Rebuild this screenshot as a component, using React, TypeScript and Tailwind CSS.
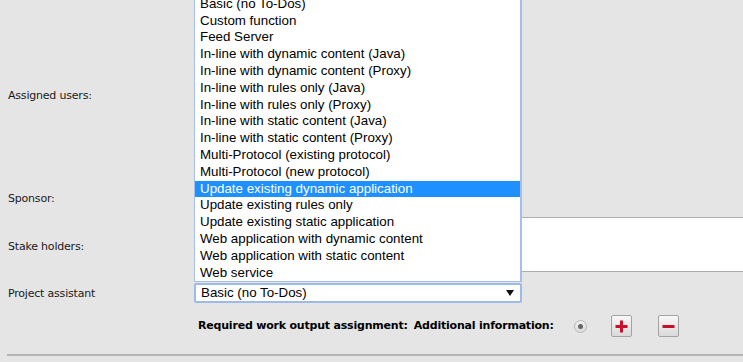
const OPTIONS = [
  'Basic (no To-Dos)',
  'Custom function',
  'Feed Server',
  'In-line with dynamic content (Java)',
  'In-line with dynamic content (Proxy)',
  'In-line with rules only (Java)',
  'In-line with rules only (Proxy)',
  'In-line with static content (Java)',
  'In-line with static content (Proxy)',
  'Multi-Protocol (existing protocol)',
  'Multi-Protocol (new protocol)',
  'Update existing dynamic application',
  'Update existing rules only',
  'Update existing static application',
  'Web application with dynamic content',
  'Web application with static content',
  'Web service',
];

const SELECTED = 'Update existing dynamic application';

function Label({ children, className = '' }: { children: React.ReactNode; className?: string }) {
  return (
    <div className={`pl-2 text-[11px] text-[#1a1a1a] tracking-[-0.2px] ${className}`}>{children}</div>
  );
}

function IconButton({ kind }: { kind: 'plus' | 'minus' }) {
  return (
    <button className="w-[21px] h-[22px] flex items-center justify-center rounded-[2px] border border-[#a3a3a3] bg-gradient-to-b from-[#f7f7f7] to-[#dadada]">
      <svg width="13" height="13" viewBox="0 0 13 13">
        {kind === 'plus' && <rect x="5" y="0.5" width="3" height="12" fill="#c8102e" />}
        <rect x="0.5" y="5" width="12" height="3" fill="#c8102e" />
      </svg>
    </button>
  );
}

export default function App() {
  return (
    <div className="relative w-[743px] h-[362px] overflow-hidden bg-[#e5e5e5] font-['DejaVu_Sans',sans-serif]">
      <div className="flex flex-col">
        <div className="h-[188px] grid grid-cols-[194px_1fr] items-center">
          <Label className="pt-[5px]">Assigned users:</Label>
          <div />
        </div>

        <div className="h-[20px] grid grid-cols-[194px_1fr] items-center">
          <Label className="pt-[2px]">Sponsor:</Label>
          <div />
        </div>

        <div className="mt-[9px] h-[55px] grid grid-cols-[194px_1fr] items-center">
          <Label className="pt-[5px]">Stake holders:</Label>
          <div className="h-full bg-white border-y border-[#adadad]" />
        </div>

        <div className="mt-[11px] h-[20px] grid grid-cols-[194px_1fr] items-center">
          <Label className="pt-[2px]">Project assistant</Label>
          <div className="w-[328px] h-[20px] flex items-center justify-between pl-[5px] pr-[6px] bg-white border-2 border-[#9dbbe8] rounded-[2px] font-['Liberation_Sans',Arial,sans-serif] text-[13.33px] text-black">
            <span>Basic (no To-Dos)</span>
            <svg width="8" height="6" viewBox="0 0 8 6">
              <path d="M0 0h8L4 6z" fill="#111" />
            </svg>
          </div>
        </div>

        <div className="mt-[12px] h-[22px] grid grid-cols-[194px_1fr] items-center">
          <div />
          <div className="flex items-center pl-1 text-[11px] font-bold text-black tracking-[-0.2px]">
            <span>Required work output assignment:</span>
            <span className="ml-[6px]">Additional information:</span>
            <span className="ml-[20px] w-[13px] h-[13px] rounded-full border border-[#b8b8b8] bg-gradient-to-b from-[#f0f0f0] to-[#dcdcdc] flex items-center justify-center">
              <span className="w-[5px] h-[5px] rounded-full bg-[#666]" />
            </span>
            <span className="ml-[24px]"><IconButton kind="plus" /></span>
            <span className="ml-[26px]"><IconButton kind="minus" /></span>
          </div>
        </div>

        <div className="mt-[17px] ml-[7px] h-[2px] bg-[#b4b4b4]" />
      </div>

      {/* open dropdown of the project assistant select */}
      <ul className="absolute left-[194px] top-[-5.2px] w-[328px] bg-white border-y border-l border-r-2 border-[#a6bfe8] font-['Liberation_Sans',Arial,sans-serif] text-[13.33px]">
        {OPTIONS.map((o) => (
          <li
            key={o}
            className={`h-[16.8px] leading-[16.8px] pl-[5px] whitespace-nowrap ${
              o === SELECTED ? 'bg-[#1e90ff] text-white' : 'text-black'
            }`}
          >
            {o}
          </li>
        ))}
      </ul>
    </div>
  );
}
